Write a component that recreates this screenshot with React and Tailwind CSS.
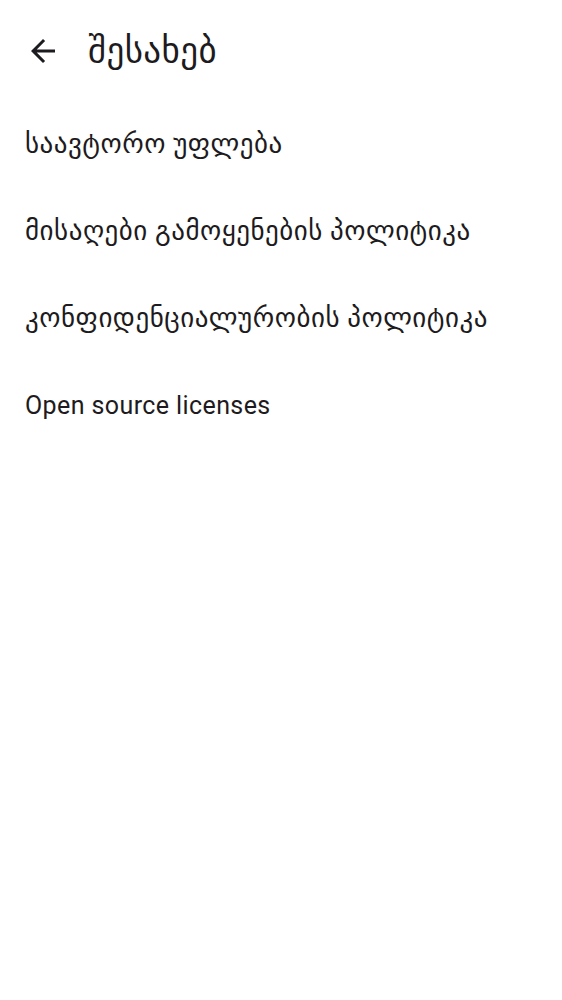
export default function App() {
  const items = [
    { t: "საავტორო უფლება", ka: true },
    { t: "მისაღები გამოყენების პოლიტიკა", ka: true },
    { t: "კონფიდენციალურობის პოლიტიკა", ka: true },
    { t: "Open source licenses", ka: false },
  ];
  return (
    <div className="w-[562px] h-[1000px] bg-white text-[#1d1b20]" style={{ fontFamily: "Roboto, 'DejaVu Sans', sans-serif" }}>
      <div className="flex items-center h-[101px] pl-[25px]">
        <svg width="36" height="36" viewBox="0 0 24 24" className="shrink-0">
          <path d="M20 11H7.83l5.59-5.59L12 4l-8 8 8 8 1.41-1.41L7.83 13H20v-2z" fill="#1d1b20" />
        </svg>
        <div className="ml-[27px] text-[35px] leading-none tracking-[0.4px]">შესახებ</div>
      </div>
      <div className="flex flex-col">
        {items.map(({ t, ka }) => (
          <div
            key={t}
            className={
              ka
                ? "h-[87px] flex items-center pl-[25px] text-[27px] tracking-[0.5px]"
                : "h-[87px] flex items-center pl-[25px] text-[25px] tracking-[0.4px]"
            }
          >
            {t}
          </div>
        ))}
      </div>
    </div>
  );
}
